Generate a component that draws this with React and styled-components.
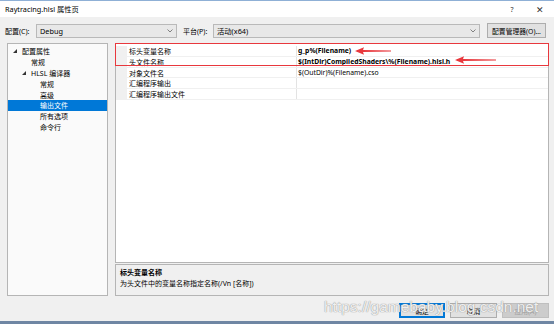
import React from "react";
import styled, { createGlobalStyle } from "styled-components";

const GlobalStyle = createGlobalStyle`
  html, body { margin: 0; padding: 0; background: #f0f0f0; }
  * { box-sizing: border-box; }
  body {
    font-family: "Noto Sans", "Noto Sans CJK SC", sans-serif;
    font-size: 7px;
    color: #000;
  }
`;

const treeItems = [
  { label: "配置属性", depth: 0, open: true },
  { label: "常规", depth: 1 },
  { label: "HLSL 编译器", depth: 1, open: true },
  { label: "常规", depth: 2 },
  { label: "高级", depth: 2 },
  { label: "输出文件", depth: 2, selected: true },
  { label: "所有选项", depth: 2 },
  { label: "命令行", depth: 2 },
];

const rows = [
  { name: "标头变量名称", value: "g_p%(Filename)", bold: true },
  { name: "头文件名称", value: "$(IntDir)CompiledShaders\\%(Filename).hlsl.h", bold: true },
  { name: "对象文件名", value: "$(OutDir)%(Filename).cso" },
  { name: "汇编程序输出", value: "" },
  { name: "汇编程序输出文件", value: "" },
];

const Window = styled.div`
  position: relative;
  width: 554px;
  height: 324px;
  background: #f0f0f0;
  display: flex;
  flex-direction: column;
  border-top: 1px solid #8fb0d6;
  overflow: hidden;
`;

const TitleBar = styled.div`
  height: 16px;
  background: #fff;
  display: flex;
  align-items: center;
  padding: 0 0 0 5px;
  font-size: 7.3px;
`;

const TitleText = styled.div`
  flex: 1;
`;

const TitleButton = styled.div`
  width: 28px;
  text-align: center;
  font-size: ${(p) => p.$size || 8}px;
  color: #333;
`;

const ConfigRow = styled.div`
  display: flex;
  align-items: center;
  height: 15px;
  margin-top: 6px;
  padding: 0 8px 0 5px;
`;

const Label = styled.div`
  width: ${(p) => p.$w}px;
  flex-shrink: 0;
`;

const Combo = styled.div`
  width: ${(p) => p.$w}px;
  height: 14px;
  background: #e8e8e8;
  border: 1px solid #b9b9b9;
  display: flex;
  align-items: center;
  padding: 0 3px;
  margin-right: ${(p) => p.$mr || 0}px;
  font-size: 7.3px;
`;

const ComboText = styled.div`
  flex: 1;
`;

const Chevron = styled.svg`
  width: 6px;
  height: 4px;
`;

const Button = styled.div`
  width: ${(p) => p.$w}px;
  height: 15px;
  display: flex;
  align-items: center;
  justify-content: center;
  border: 1px solid;
  box-shadow: ${(p) => (p.$primary ? "inset 0 0 0 1px #0078d7" : "none")};
  color: ${(p) => (p.$disabled ? "#a0a0a0" : "#000")};
  background: ${(p) => (p.$disabled ? "#cccccc" : "#e1e1e1")};
  border-color: ${(p) => (p.$disabled ? "#bfbfbf" : p.$primary ? "#0078d7" : "#adadad")};
  font-size: 6.8px;
`;

const Body = styled.div`
  display: flex;
  gap: 7px;
  margin-top: 5px;
  padding: 0 5px 0 7px;
  height: 253px;
`;

const Tree = styled.div`
  width: 101px;
  background: #fafafa;
  border: 1px solid #b5b5b5;
  padding-top: 2px;
`;

const TreeRow = styled.div`
  height: 10.8px;
  display: flex;
  align-items: center;
  padding-left: ${(p) => 5 + p.$depth * 9}px;
  background: ${(p) => (p.$selected ? "#0078d7" : "transparent")};
  color: ${(p) => (p.$selected ? "#fff" : "#000")};
`;

const Arrow = styled.span`
  width: 9px;
  display: inline-flex;
  align-items: center;
`;

const RightCol = styled.div`
  flex: 1;
  display: flex;
  flex-direction: column;
  gap: 1px;
`;

const Grid = styled.div`
  position: relative;
  height: 220px;
  background: #fff;
  border: 1px solid #b5b5b5;
  padding-top: 2px;
`;

const GridRow = styled.div`
  display: flex;
  height: 10.8px;
  border-bottom: 1px solid #f0f0f0;
`;

const Gutter = styled.div`
  width: 11px;
  background: #f0f0f0;
`;

const NameCell = styled.div`
  width: 170px;
  padding-left: 2px;
  display: flex;
  align-items: center;
  border-right: 1px solid #e3e3e3;
`;

const ValueCell = styled.div`
  flex: 1;
  padding-left: 1px;
  display: flex;
  align-items: center;
  font-weight: ${(p) => (p.$bold ? 700 : 400)};
  font-size: 6.8px;
`;

const Highlight = styled.div`
  position: absolute;
  left: -1px;
  top: -1px;
  width: 434px;
  height: 23px;
  border: 1.5px solid #e8383d;
  pointer-events: none;
`;

const ArrowMark = styled.svg`
  position: absolute;
  left: ${(p) => p.$x}px;
  top: ${(p) => p.$y}px;
`;

const Description = styled.div`
  height: 32px;
  border: 1px solid #b5b5b5;
  padding: 3px 4px;
`;

const DescTitle = styled.div`
  font-weight: 700;
  line-height: 10px;
`;

const DescText = styled.div`
  line-height: 11px;
`;

const Footer = styled.div`
  position: relative;
  display: flex;
  justify-content: flex-end;
  gap: 5px;
  margin-top: 7px;
  padding-right: 5px;
`;

const Watermark = styled.div`
  position: absolute;
  left: 324px;
  top: -5px;
  font-family: "Liberation Sans", sans-serif;
  font-size: 15.5px;
  color: rgba(255, 255, 255, 0.85);
  text-shadow: 0 0 1px #9a9a9a, 0 0 1px #9a9a9a;
  white-space: nowrap;
  pointer-events: none;
`;

const BottomEdge = styled.div`
  position: absolute;
  left: 0;
  right: 0;
  bottom: 0;
  height: 3px;
  background: #6f86a3;
`;

const Triangle = () => (
  <svg width="4" height="4" viewBox="0 0 4 4">
    <path d="M4 0 L4 4 L0 4 Z" fill="#333" />
  </svg>
);

const RedArrow = ({ x, y, w }) => (
  <ArrowMark $x={x} $y={y} width={w} height="8" viewBox={`0 0 ${w} 8`}>
    <path d={`M0 4 L9 0.3 L8 3 L${w} 3.5 L${w} 4.5 L8 5 L9 7.7 Z`} fill="#e8383d" />
  </ArrowMark>
);

export default function App() {
  return (
    <>
      <GlobalStyle />
      <Window>
        <TitleBar>
          <TitleText>Raytracing.hlsl 属性页</TitleText>
          <TitleButton $size={7}>?</TitleButton>
          <TitleButton $size={9}>✕</TitleButton>
        </TitleBar>

        <ConfigRow>
          <Label $w={31}>配置(C):</Label>
          <Combo $w={141} $mr={6}>
            <ComboText>Debug</ComboText>
            <Chevron viewBox="0 0 6 4">
              <path d="M0.5 0.5 L3 3 L5.5 0.5" fill="none" stroke="#666" strokeWidth="0.8" />
            </Chevron>
          </Combo>
          <Label $w={30}>平台(P):</Label>
          <Combo $w={267} $mr={7}>
            <ComboText>活动(x64)</ComboText>
            <Chevron viewBox="0 0 6 4">
              <path d="M0.5 0.5 L3 3 L5.5 0.5" fill="none" stroke="#666" strokeWidth="0.8" />
            </Chevron>
          </Combo>
          <Button $w={59}>配置管理器(O)...</Button>
        </ConfigRow>

        <Body>
          <Tree>
            {treeItems.map((item, i) => (
              <TreeRow key={i} $depth={item.depth} $selected={item.selected}>
                <Arrow>{item.open && <Triangle />}</Arrow>
                {item.label}
              </TreeRow>
            ))}
          </Tree>
          <RightCol>
            <Grid>
              {rows.map((r, i) => (
                <GridRow key={i}>
                  <Gutter />
                  <NameCell>{r.name}</NameCell>
                  <ValueCell $bold={r.bold}>{r.value}</ValueCell>
                </GridRow>
              ))}
              <Highlight />
              <RedArrow x={239} y={3} w={36} />
              <RedArrow x={339} y={12} w={41} />
            </Grid>
            <Description>
              <DescTitle>标头变量名称</DescTitle>
              <DescText>为头文件中的变量名称指定名称(/Vn [名称])</DescText>
            </Description>
          </RightCol>
        </Body>

        <Footer>
          <Watermark>https://gamebaby.blog.csdn.net</Watermark>
          <Button $w={46} $primary>确定</Button>
          <Button $w={47}>取消</Button>
          <Button $w={47} $disabled>应用(A)</Button>
        </Footer>
        <BottomEdge />
      </Window>
    </>
  );
}
